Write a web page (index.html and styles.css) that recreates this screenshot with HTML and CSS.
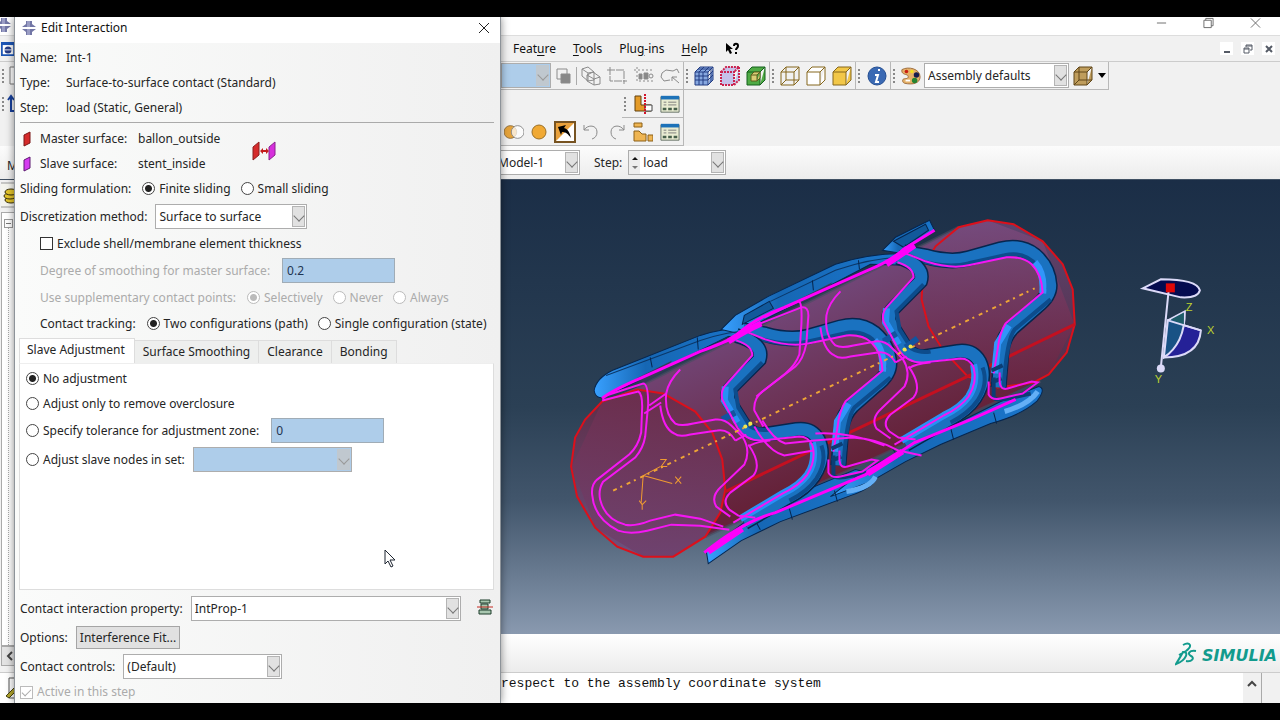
FILE: index.html
```html
<!DOCTYPE html>
<html lang="en">
<head>
<meta charset="utf-8">
<title>Edit Interaction</title>
<link rel="stylesheet" href="styles.css">
</head>
<body>
<svg class="defs" aria-hidden="true">
  <defs>
    <symbol id="logo" viewBox="0 0 16 16"><path d="M5 1h6v3l4 3H1l4-3z" fill="#7377a6"/><path d="M1 9h14l-4 3v3H5v-3L1 9z" fill="#7377a6"/><path d="M6 1h3v6H6zM6 9h3v6H6z" fill="#9a9dc4"/></symbol>
    <symbol id="box" viewBox="0 0 20 20"><path d="M1 6h13v13H1zM1 6l5-5h13l-5 5M19 1v13l-5 5"/></symbol>
    <symbol id="table" viewBox="0 0 22 20"><path d="M1 2h20v17H1z" fill="#e9ecd2" stroke="#5e6b60"/><path d="M1 1h20v4H1z" fill="#1d72b8"/><path d="M4 8h3M4 11h3M9 8h9M9 11h9" stroke="#777" stroke-width="1"/><path d="M3 14h4v3H3zM9 14h4v3H9zM15 14h4v3h-4z" fill="#47604b"/></symbol>
  </defs>
</svg>
<div class="app">
  <header class="titlebar">
    <svg class="i16 edge-logo"><use href="#logo"/></svg>
    <div class="win-buttons">
      <button aria-label="Minimize"><svg viewBox="0 0 12 12"><path d="M1 6h10"/></svg></button>
      <button aria-label="Restore"><svg viewBox="0 0 12 12"><path d="M1 3h8v8H1zM3 3V1h8v8H9"/></svg></button>
      <button aria-label="Close"><svg viewBox="0 0 12 12"><path d="M1 1l10 10M11 1L1 11"/></svg></button>
    </div>
  </header>
  <nav class="menubar">
    <svg class="doc-icon" viewBox="0 0 16 16"><path d="M1 1h14v14H1z" fill="#fff" stroke="#1c55b5" stroke-width="2"/><path d="M1 2h14" stroke="#1c55b5" stroke-width="3"/><circle cx="8" cy="9" r="4" fill="#263d87"/><path d="M3 9h10" stroke="#fff"/></svg>
    <div class="menus">
      <button>Feat<u>u</u>re</button><button><u>T</u>ools</button><button>Plu<u>g</u>-ins</button><button><u>H</u>elp</button>
      <button aria-label="What's this"><svg class="help-icon" viewBox="0 0 14 14"><path d="M1 1v9l2-2 2 4 2-1-2-4h3z"/><path d="M9 4c0-3 4-3 4 0 0 2-2 2-2 4M11 10v2" fill="none" stroke="#000" stroke-width="2"/></svg></button>
    </div>
    <div class="doc-buttons">
      <button aria-label="Minimize view"><svg viewBox="0 0 10 10"><path d="M2 8h6"/></svg></button>
      <button aria-label="Restore view"><svg viewBox="0 0 10 10"><path d="M1 4h5v5H1zM3 3V1h6v5H7" stroke-width="1"/><path d="M1 5h5M3 2h6" stroke-width="1"/></svg></button>
      <button aria-label="Close view"><svg viewBox="0 0 10 10"><path d="M2 2l6 6M8 2L2 8"/></svg></button>
    </div>
  </nav>
  <div class="toolbar row-a">
    <div class="under"><i class="grip"></i><svg class="edge-icon" viewBox="0 0 10 20"><path d="M9 1H3v17h6" fill="#fff" stroke="#777"/></svg></div>
    <div class="group">
      <span class="combo tool-combo disabled"><select disabled aria-label="Display group"><option></option></select></span>
      <button class="s25" aria-label="Replace"><svg viewBox="0 0 20 20" class="gray"><path d="M3 3h10v10H3z"/><path d="M7 8h9v9H7z" fill="#888"/></svg></button>
      <i class="sep"></i>
      <button class="s27" aria-label="Box views"><svg viewBox="0 0 20 20" class="gray"><path d="M1 3l6-2 6 5v8l-6 1-6-5zM1 3l6 4 6-1M7 7v8M6 9l6-3 7 5v7l-6 1-7-4zM6 9l7 4 6-2M13 13v6"/></svg></button>
      <button class="s26" aria-label="Select region"><svg viewBox="0 0 20 20" class="gray"><path d="M0 4h17v14M3 1v14h17" stroke-dasharray="8 1"/></svg></button>
      <button class="s27" aria-label="Select nodes"><svg viewBox="0 0 20 20" class="gray"><path d="M0 4h20M3 1v14h17" stroke-dasharray="2 2"/><path d="M5 8h3v5H5zM10 7h4v6h-4z" fill="#888"/><circle cx="17" cy="10" r="2"/></svg></button>
      <button class="s26" aria-label="Lasso"><svg viewBox="0 0 20 20" class="gray"><path d="M10 14l-6 1-3-4 1-4 4-3 7 1 4-2 2 4M19 17l-7-6M12 15v-4h5"/></svg></button>
    </div>
    <div class="group"><i class="grip"></i>
      <button class="s26" aria-label="Mesh"><svg viewBox="0 0 20 20" fill="#86a7df" stroke="#223c82"><use href="#box"/><path d="M5 6v13M9 6v13M1 10h13l5-5M1 14h13l5-5M4 3h13v13M10 1L5 6M15 1l-5 5" fill="none"/></svg></button>
      <button class="s26" aria-label="Seeds"><svg viewBox="0 0 20 20" fill="#c6c2ea" stroke="#cb2450" stroke-width="2" stroke-dasharray="2 1"><use href="#box"/></svg></button>
      <button class="s26" aria-label="Substructure"><svg viewBox="0 0 20 20"><g fill="#4fab45" stroke="#14601d"><use href="#box"/></g><path d="M5 9h6v6H5zM5 9l3-3h6l-3 3M14 6v6l-3 3" fill="#d9cd75" stroke="#5c5e1c"/></svg></button>
    </div>
    <div class="group"><i class="grip"></i>
      <button class="s26" aria-label="Wireframe"><svg viewBox="0 0 20 20" fill="none" stroke="#85671c"><use href="#box"/><path d="M1 19l5-5h13M6 14V1"/></svg></button>
      <button class="s26" aria-label="Hidden"><svg viewBox="0 0 20 20" fill="#fff" stroke="#85671c"><use href="#box"/></svg></button>
      <button class="s26" aria-label="Shaded"><svg viewBox="0 0 20 20" fill="#f2c748" stroke="#85671c"><use href="#box"/></svg></button>
    </div>
    <div class="group"><i class="grip wide"></i>
      <button class="s26" aria-label="Query"><svg viewBox="0 0 20 20"><circle cx="10" cy="10" r="9" fill="#3a69b3" stroke="#244e92"/><path d="M11 4h2M8 9h3l-2 7h3" fill="none" stroke="#fff" stroke-width="2"/></svg></button>
    </div>
    <div class="group"><i class="grip"></i>
      <button class="s26" aria-label="Colors"><svg viewBox="0 0 22 20"><path d="M1 3C8-1 21 2 21 11c0 7-8 9-17 7-3-1-3-5 0-5 4 0 5-2 3-4C5 8 0 8 1 3z" fill="#e5b169" stroke="#99693b"/><circle cx="6" cy="5" r="2" fill="#c91e12"/><circle cx="12" cy="5" r="2" fill="#f3dd23"/><circle cx="17" cy="9" r="3" fill="#151c4f"/><circle cx="15" cy="15" r="3" fill="#258432"/><path d="M5 15h5" stroke="#fff" stroke-width="2"/></svg></button>
      <span class="combo color-combo"><select aria-label="Color code"><option>Assembly defaults</option></select></span>
      <button class="s27" aria-label="Translucency"><svg viewBox="0 0 20 20" fill="#bf9d5c" stroke="#604719"><use href="#box"/><path d="M1 19l5-5h13M6 14V1" fill="none"/></svg></button>
      <button class="caret" aria-label="More"></button>
    </div>
  </div>
  <div class="toolbar row-b">
    <div class="under"><i class="grip"></i><svg class="edge-icon" viewBox="0 0 10 20"><path d="M4 18V2M1 6l3-4 3 4M4 17h6" fill="none" stroke="#17409b" stroke-width="2"/></svg></div>
    <div class="group b-group"><i class="grip"></i>
      <button class="s27" aria-label="Partition"><svg viewBox="0 0 20 20"><path d="M2 2h6v9h10v6H2z" fill="#e49b28" stroke="#60410f"/><path d="M12 11h7v6h-7z" fill="#fff" stroke="#444"/><path d="M12 0v20" stroke="#d2142b" stroke-width="2" stroke-dasharray="2 1"/></svg></button>
      <button class="s27" aria-label="Partition manager"><svg viewBox="0 0 22 20"><use href="#table"/></svg></button>
    </div>
  </div>
  <div class="toolbar row-c">
    <div class="under"></div>
    <div class="group">
      <button class="s25" aria-label="Intersect"><svg viewBox="0 0 22 20"><circle cx="7" cy="10" r="7" fill="#e5a33a" stroke="#8b6a38"/><circle cx="15" cy="10" r="7" fill="#fffb" stroke="#888"/></svg></button>
      <button class="s25" aria-label="Select whole"><svg viewBox="0 0 20 20"><circle cx="10" cy="10" r="7" fill="#f0a934" stroke="#9b7026"/></svg></button>
      <button class="s27 pressed" aria-label="Drag select"><svg viewBox="0 0 22 22"><path d="M0 0h22v22H0z" fill="#fff"/><path d="M0 0h22L0 22z" fill="#e9a13c"/><path d="M1 1h20v20H1z" fill="none" stroke="#775321" stroke-width="2"/><path d="M4 6l8-2-2 3c4 1 6 5 7 10-3-4-5-6-9-6l-1 3z"/></svg></button>
      <button class="s26" aria-label="Undo"><svg viewBox="0 0 20 20" class="gray"><path d="M3 3v5h5M3 8c4-6 13-5 13 2 0 4-2 6-5 7"/></svg></button>
      <button class="s26" aria-label="Redo"><svg viewBox="0 0 20 20" class="gray"><path d="M17 3v5h-5M17 8C13 2 4 3 4 10c0 4 2 6 5 7"/></svg></button>
      <button class="s26" aria-label="Assembly"><svg viewBox="0 0 20 20" fill="#efb552" stroke="#8c6018"><path d="M1 1h8v4H1zM1 9h5l3 3h4v7H1zM15 13h5v6h-5z"/></svg></button>
      <button class="s27" aria-label="Feature manager"><svg viewBox="0 0 22 20"><use href="#table"/></svg></button>
    </div>
  </div>
  <div class="context">
    <div class="under"><span class="edge-letter">M</span></div>
    <span class="combo model-combo"><select aria-label="Model"><option>Model-1</option></select></span>
    <label for="step">Step:</label>
    <span class="combo step-combo"><i class="spin"></i><select id="step"><option>load</option></select></span>
  </div>
  <main class="work">
    <aside class="tree">
      <svg class="db" viewBox="0 0 16 26"><path d="M0 1h16v24H0" fill="#f4f4ee" stroke="#999"/><g fill="#e5c62c" stroke="#332a0a"><ellipse cx="10" cy="18" rx="6" ry="3"/><ellipse cx="9" cy="14" rx="6" ry="3"/><ellipse cx="10" cy="10" rx="6" ry="3"/></g></svg>
      <div class="tree-list"><i class="minus"></i></div>
      <button class="scroll-left" aria-label="Scroll left"><svg viewBox="0 0 10 10"><path d="M7 1L3 5l4 4"/></svg></button>
    </aside>
    <section class="right">
      <svg class="viewport" viewBox="501 180 778 455" preserveAspectRatio="xMidYMid slice" role="img" aria-label="Stent and balloon assembly">
        <defs>
          <linearGradient id="sky" x1="0" y1="0" x2="0" y2="1"><stop offset="0" stop-color="#1a2d46"/><stop offset=".5" stop-color="#2b4055"/><stop offset=".7" stop-color="#42566c"/><stop offset="1" stop-color="#8f9fb5"/></linearGradient>
          <linearGradient id="body" gradientUnits="userSpaceOnUse" x1="790" y1="290" x2="860" y2="460"><stop offset="0" stop-color="#72497d"/><stop offset=".5" stop-color="#6d3559"/><stop offset="1" stop-color="#652239"/></linearGradient>
          <linearGradient id="cap" x1="0" y1="0" x2="0" y2="1"><stop offset="0" stop-color="#6a2944"/><stop offset="1" stop-color="#714b7d"/></linearGradient>
          <linearGradient id="cap2" x1="0" y1="0" x2="0" y2="1"><stop offset="0" stop-color="#764c7e"/><stop offset="1" stop-color="#6a2642"/></linearGradient>
          <linearGradient id="blue" x1="0" y1="0" x2="1" y2="0"><stop offset="0" stop-color="#38a0ff"/><stop offset=".3" stop-color="#1667b4"/><stop offset="1" stop-color="#1a76cc"/></linearGradient>
          <path id="crown" d="M903 253L925 257Q950 264 968 259L1000 250Q1020 245 1034 256Q1048 268 1049 286Q1049 297 1036 307L1012 328Q1003 337 1001 350L998 388"/>
          <path id="crown-in" d="M905 254L925 262Q950 270 968 266L1006 258Q1022 257 1031 265Q1041 275 1042 293L1005 324Q999 333 997 350L993 374"/>
          <path id="crown-mid" d="M912 259Q945 270 968 264L1004 256Q1020 252 1032 262Q1043 272 1044 290M1050 300L1014 330Q1006 340 1003 388"/>
          <path id="wave" d="M897 258Q925 266 920 282L893 309Q886 316 890 324L903 345Q911 359 925 357L957 352Q972 350 979 362Q987 379 974 399Q966 411 948 420L905 445"/>
          <path id="wave-in" d="M897 263Q913 268 913 278L886 308Q881 314 883 322L898 350Q907 364 923 363L960 359Q969 359 973 368Q977 382 968 397Q960 408 943 416L894 445"/>
          <path id="wave-mid" d="M923 285L896 312L899 330L911 349Q920 354 930 352M982 368Q988 384 977 401Q968 414 950 423"/>
          <g id="ribbon" fill="none"><use href="#crown" stroke="#06264e" stroke-width="16"/><use href="#crown" stroke="#1a72c0" stroke-width="13"/><use href="#crown-mid" stroke="#0d4c8c" stroke-width="4"/><path d="M1034 263Q1044 274 1042 294M1008 326L997 344L994 374" stroke="#3195fa" stroke-width="7"/></g>
          <g id="ribbon-b" fill="none"><use href="#wave" stroke="#06264e" stroke-width="15"/><use href="#wave" stroke="#1a72c0" stroke-width="12"/><use href="#wave-mid" stroke="#0d4c8c" stroke-width="4"/><path d="M886 309L885 323L898 345M973 365Q977 384 968 397Q960 408 943 416L901 441" stroke="#2890f5" stroke-width="7"/></g>
          <g id="clip" fill="none"><path d="M991 371L1002 366M991 383L1001 379M993 378V398Q995 402 1012 398L1030 394" stroke="#0c3d73" stroke-width="4"/><path d="M988 382V395Q991 401 1000 399L1022 394L1037 383L1031 382L1007 389Q1000 391 999 383V373" stroke="#f312f1" stroke-width="2"/></g>
          <g id="back" fill="none" stroke="#f516f3" stroke-width="2"><path d="M680 370Q668 382 666 394Q664 414 675 424Q681 427 693 424L715 420Q724 419 731 426L742 437Q751 451 744 465L721 487Q710 497 716 507L730 517"/><path d="M660 406Q663 429 674 434Q679 438 690 435L717 431Q728 429 735 441M748 445Q762 465 753 476L730 493Q721 502 729 510L738 516L755 518M735 441L746 435M748 447Q755 442 770 441"/></g>
        </defs>
        <path d="M400 170h980v475H400z" fill="url(#sky)"/>
        <path d="M602 402L637 388L958 228L987 221L1042 242L1074 325L1048 375L990 405L705 537L673 557L643 557L595 528L572 467z" fill="url(#body)"/>
        <path d="M637 388L958 228M705 537L1040 382" stroke="#484d61" stroke-width="3" opacity=".6"/>
        <path d="M987 221L1013 225L1042 242L1062 265L1072 290L1074 325L1066 353L1048 375L1033 383L997 388L967 377L942 350L928 327L921 300L923 267L935 247L958 228z" fill="url(#cap2)" fill-opacity=".7" stroke="#dc101b" stroke-width="2"/>
        <path d="M602 402L585 420L575 438L571 467L577 497L595 528L617 547L643 557L673 557L705 537L720 513L725 490L722 460L712 433L695 412L663 394L637 390z" fill="url(#cap)" fill-opacity=".8" stroke="#dc101b" stroke-width="2"/>
        <path d="M725 492L967 377L1074 325" stroke="#c41020" stroke-width="3"/>
        <g stroke="#06264e" fill="url(#blue)">
          <path d="M594 391Q596 379 612 371L700 336Q735 325 765 331L762 340L728 337L606 397Q596 401 594 391z"/>
          <path d="M721 330L735 316L768 297L835 265Q875 252 910 255L905 266L870 265L738 334z"/>
          <path d="M882 251L895 238L929 221L934 231L900 254z"/>
          <path d="M706 551L745 522L802 492L855 470L878 476Q872 489 850 496L780 522L741 541L708 564z"/>
          <path d="M830 497L863 471L920 442L1000 402L1038 387Q1046 389 1036 402Q1020 416 990 424L940 445L905 462L870 482z"/>
        </g>
        <path d="M606 376L700 341Q735 330 755 332M770 302L835 271Q870 259 900 258" fill="none" stroke="#0b3768"/>
        <path d="M744 316L769 302L773 309L742 325zM893 242L925 225L928 231L903 248z" fill="#12599b" stroke="#06264e"/>
        <path d="M650 358l2 10M697 338l1 12M812 281l1 10M858 261l1 9M789 509l3 11M834 491l3 11M950 428l3 12M993 413l3 11M892 449l6 9M755 521l5 9" stroke="#06264e"/>
        <path d="M636 379L672 361L664 371L645 383zM795 302L832 283L825 292L800 304z" fill="#343b55"/>
        <path d="M846 492Q870 488 875 477M1004 412Q1028 405 1037 392" fill="none" stroke="#64aff5" stroke-width="5"/>
        <use href="#ribbon"/><use href="#ribbon" x="-160" y="78"/>
        <use href="#ribbon-b"/><use href="#ribbon-b" x="-161" y="78"/>
        <path d="M883 342L896 334M905 348L917 339M722 420L735 413" stroke="#1254a0" stroke-width="6"/>
        <g fill="none" stroke="#f516f3" stroke-width="2">
          <use href="#crown-in"/><use href="#crown-in" x="-160" y="78"/><use href="#wave-in"/><use href="#wave-in" x="-161" y="78"/>
          <path d="M602 401L638 392Q642 394 642 407L641 433Q638 447 629 455L597 480Q591 485 592 495Q594 519 618 531Q630 535 647 531L671 525L700 526L729 530"/>
          <path d="M606 396L643 384Q648 384 648 405L645 437Q643 449 635 458L603 482Q598 490 600 500Q605 520 625 525Q635 527 650 521L675 515L700 519L723 527M644 414L661 403M649 406L666 394"/>
          <path d="M760 324L801 308Q808 307 808 316L806 344Q803 360 795 367L762 392Q753 399 754 411L763 427"/>
          <path d="M764 318L798 302Q802 302 801 325L799 355Q795 366 785 374L756 397M754 427Q768 452 784 456L813 451M762 421Q773 440 785 444L814 441L852 438Q876 439 898 451L921 456M815 434Q850 432 884 446"/>
        </g>
        <use href="#back"/><use href="#back" x="160" y="-78"/>
        <use href="#clip"/><use href="#clip" x="-160" y="78"/>
        <g fill="none" stroke="#ff00fb" stroke-width="3"><path d="M602 399Q612 391 640 379L700 352Q725 343 735 337Q752 320 784 308L865 272Q890 262 903 250L934 231"/><path d="M704 553Q742 522 775 513L865 475L914 443L970 420L1015 400"/></g>
        <path d="M728 342Q745 331 761 324M886 265Q901 255 914 246M867 474L902 452M708 552L742 529" stroke="#ff00fb" stroke-width="6" fill="none"/>
        <path d="M613 491L1034 289" stroke="#efa536" stroke-width="2" stroke-dasharray="4 4 2 5"/>
        <path d="M643 476L641 503M643 476L672 484M643 476L660 467" stroke="#f09b31" stroke-width="1"/>
        <g fill="none" stroke="#f09b31"><path d="M675 477l6 7M681 477l-6 7M660 460h6l-5 7h6M639 501l3 4 4-4M642 505v5"/></g>
        <g fill="#eee650"><circle cx="745" cy="427" r="2"/><circle cx="750" cy="424" r="2"/><circle cx="904" cy="350" r="2"/><circle cx="910" cy="347" r="2"/></g>
        <g stroke="#dcdaf8" stroke-width="2"><path d="M1142 289L1160 280Q1196 280 1199 291Q1197 299 1180 298z" fill="#050b50"/><path d="M1167 321L1200 331Q1198 358 1163 358z" fill="#252197"/><path d="M1167 321L1184 312Q1184 344 1163 358z" fill="#195285"/><path d="M1170 320L1183 313V325z" fill="#1e5c68" stroke="none"/><path d="M1167 321L1200 331M1168 289L1160 368" fill="none"/></g>
        <path d="M1165 284h9v9h-9z" fill="#e00808"/><circle cx="1160" cy="369" r="4" fill="#dcdaf8"/>
        <g class="axis"><text x="1185" y="312">Z</text><text x="1206" y="335">X</text><text x="1154" y="384">Y</text></g>
      </svg>
      <div class="brand"><svg viewBox="0 0 22 24"><path d="M8 3c7-4 10 1 3 6L4 13M8 10c6-1 4 8-7 12 3-5 5-8 7-12zM21 9c-7-1-9 3-5 5s1 6-5 5" fill="none" stroke="#129b8d" stroke-width="2"/></svg><span>SIMULIA</span></div>
    </section>
  </main>
  <footer class="messages">
    <div class="under"><svg class="pencil" viewBox="0 0 10 22"><path d="M4 1h6v20H4z" fill="#fff" stroke="#555"/><path d="M1 19l9-9v5l-6 6z" fill="#b2a62b" stroke="#443f10"/></svg></div>
    <output>respect to the assembly coordinate system</output>
    <button class="scroll-up" aria-label="Scroll up"><svg viewBox="0 0 10 10"><path d="M1 7l4-4 4 4"/></svg></button>
  </footer>
</div>

<form class="dialog" role="dialog" aria-labelledby="dlg-title">
  <div class="dlg-title"><svg class="i16"><use href="#logo"/></svg><h1 id="dlg-title">Edit Interaction</h1><button type="button" aria-label="Close"><svg viewBox="0 0 12 12"><path d="M1 1l10 10M11 1L1 11"/></svg></button></div>
  <dl class="info"><dt>Name:</dt><dd>Int-1</dd><dt>Type:</dt><dd>Surface-to-surface contact (Standard)</dd><dt>Step:</dt><dd>load (Static, General)</dd></dl>
  <hr>
  <div class="surfaces">
    <svg class="face" viewBox="0 0 8 16"><path d="M1 4l6-3v11l-6 3z" fill="#d52b2b" stroke="#7b1717"/></svg><span>Master surface:</span><span>ballon_outside</span>
    <button type="button" class="swap" aria-label="Switch surfaces"><svg viewBox="0 0 24 20"><path d="M1 6l6-5v13l-6 5z" fill="#d52b2b" stroke="#8b2020"/><path d="M17 6l6-5v13l-6 5z" fill="#d630dc" stroke="#8b238e"/><path d="M8 10l3-3v2h3V7l3 3-3 3v-2h-3v2z" fill="#c31c1c"/></svg></button>
    <svg class="face" viewBox="0 0 8 16"><path d="M1 4l6-3v11l-6 3z" fill="#d53cf0" stroke="#5d1a70"/></svg><span>Slave surface:</span><span>stent_inside</span>
  </div>
  <div class="row short"><span class="lbl">Sliding formulation:</span><label><input type="radio" name="slide" checked>Finite sliding</label><label><input type="radio" name="slide">Small sliding</label></div>
  <div class="row tall top"><label for="disc">Discretization method:</label><span class="combo disc-combo"><select id="disc"><option>Surface to surface</option></select></span></div>
  <div class="row tall indent"><label><input type="checkbox">Exclude shell/membrane element thickness</label></div>
  <div class="row tall indent"><label class="off" for="deg">Degree of smoothing for master surface:</label><input class="field" id="deg" value="0.2" disabled></div>
  <div class="row tall indent off"><span class="lbl">Use supplementary contact points:</span><label><input type="radio" name="supp" checked disabled>Selectively</label><label><input type="radio" name="supp" disabled>Never</label><label><input type="radio" name="supp" disabled>Always</label></div>
  <div class="row short indent"><span class="lbl">Contact tracking:</span><label><input type="radio" name="track" checked>Two configurations (path)</label><label><input type="radio" name="track">Single configuration (state)</label></div>
  <div class="tabs" role="tablist"><button type="button" role="tab" aria-selected="true">Slave Adjustment</button><button type="button" role="tab">Surface Smoothing</button><button type="button" role="tab">Clearance</button><button type="button" role="tab">Bonding</button></div>
  <div class="panel" role="tabpanel">
    <div class="row short"><label><input type="radio" name="adj" checked>No adjustment</label></div>
    <div class="row short"><label><input type="radio" name="adj">Adjust only to remove overclosure</label></div>
    <div class="row big"><label><input type="radio" name="adj">Specify tolerance for adjustment zone:</label><input class="field" value="0" aria-label="Tolerance" disabled></div>
    <div class="row big"><label><input type="radio" name="adj">Adjust slave nodes in set:</label><span class="combo set-combo disabled"><select disabled aria-label="Node set"><option></option></select></span></div>
  </div>
  <div class="row big"><label for="prop">Contact interaction property:</label><span class="combo prop-combo"><select id="prop"><option>IntProp-1</option></select></span><button type="button" class="create" aria-label="Create interaction property"><svg viewBox="0 0 16 16"><path d="M3 1h10v3H3zM4 5h7v5H4zM2 11h12v4H2z" fill="#a9c7b0" stroke="#1d3d2a"/><path d="M0 8h16" stroke="#c52b23"/></svg></button></div>
  <div class="row big opt"><span>Options:</span><button type="button" class="push">Interference Fit...</button></div>
  <div class="row big"><label for="ctrl">Contact controls:</label><span class="combo ctrl-combo"><select id="ctrl"><option>(Default)</option></select></span></div>
  <div class="row last off"><label><input type="checkbox" checked disabled>Active in this step</label></div>
</form>
<svg class="cursor" viewBox="0 0 12 19" aria-hidden="true"><path d="M1 1v14l3-3 3 6 2-1-3-6h5z" fill="#fff" stroke="#1d2430"/></svg>
</body>
</html>
```
FILE: styles.css
```css
* { box-sizing: border-box; }
body { margin: 0; background: #000; color: #252525; font: 12px/18px "Noto Sans", "Open Sans", sans-serif; overflow: hidden; }
button, input, select { font: inherit; color: inherit; margin: 0; padding: 0; border: 0; background: none; }
.defs { position: absolute; width: 0; height: 0; }
.i16 { width: 16px; height: 16px; }

.app { height: 100vh; border: solid #000; border-width: 17px 0; display: flex; flex-direction: column; background: #f1f1f1; overflow: hidden; }
.under { width: 501px; flex: none; display: flex; align-items: center; }
.titlebar { height: 18px; flex: none; background: #fff; display: flex; justify-content: space-between; }
.edge-logo { margin-left: -4px; }
.win-buttons { display: flex; gap: 36px; padding-right: 19px; }
.win-buttons button { width: 11px; height: 11px; display: flex; }
.win-buttons svg, .dlg-title button svg { width: 12px; height: 12px; fill: none; stroke: #666; }
.menubar { height: 27px; flex: none; display: flex; align-items: center; border-top: 1px solid #ddd; border-bottom: 1px solid #ccc; }
.doc-icon { width: 16px; height: 14px; flex: none; }
.menus { display: flex; gap: 17px; padding-left: 497px; color: #111; }
.menus u { text-underline-offset: 2px; }
.help-icon { width: 14px; height: 14px; display: block; }
.doc-buttons { display: flex; gap: 8px; margin-left: auto; padding-right: 5px; }
.doc-buttons button { width: 13px; height: 13px; background: #fff; display: flex; align-items: center; justify-content: center; }
.doc-buttons svg { width: 10px; height: 10px; fill: none; stroke: #555b66; stroke-width: 2; }

.toolbar { height: 28px; flex: none; display: flex; }
.group { display: flex; align-items: center; border-right: 1px solid #b8b8b8; border-bottom: 1px solid #b8b8b8; }
.group button { display: flex; align-items: center; justify-content: center; height: 24px; flex: none; }
.group button svg { width: 20px; height: 20px; }
.group .pressed svg { width: 22px; height: 22px; }
.gray { fill: none; stroke: #8b8b8b; }
.s25 { width: 25px; }
.s26 { width: 26px; }
.s27 { width: 27px; }
.b-group { margin-left: 121px; }
.sep { width: 1px; height: 18px; background: #aaa; }
.grip { width: 7px; height: 16px; flex: none; background: radial-gradient(circle at 3px 2px, #888 1px, transparent 1px) 0 0 / 7px 4px; }
.grip.wide { width: 8px; }
.edge-icon { width: 10px; height: 20px; }
.caret { width: 12px; }
.caret::after { content: ""; border: 4px solid transparent; border-top: 5px solid #000; border-bottom: 0; }

.combo { position: relative; display: inline-flex; height: 25px; flex: none; background: #fff; border: 1px solid #adadad; }
.combo select { appearance: none; width: 100%; padding: 0 14px 0 3px; border-radius: 0; color: #252525; opacity: 1; }
.combo::before { content: ""; position: absolute; right: 1px; top: 1px; bottom: 1px; width: 11px; background: #e1e1e1; border: 1px solid #b4b4b4; pointer-events: none; }
.combo::after { content: ""; position: absolute; right: 3px; top: 7px; width: 7px; height: 7px; border: solid #777; border-width: 0 1px 1px 0; transform: rotate(45deg); pointer-events: none; }
.combo.disabled { background: #aecdea; }
.combo.disabled::before { background: #c0c8cf; border-color: #c0c8cf; }
.combo.disabled::after { border-color: #999; }
.tool-combo { width: 50px; }
.color-combo { width: 145px; }
.context { height: 34px; flex: none; display: flex; align-items: center; background: linear-gradient(#fcfcfc, #ececec); border-bottom: 1px solid #405063; }
.context label { padding: 0 6px 0 14px; }
.edge-letter { padding: 6px 0 0 7px; }
.model-combo { width: 86px; margin-left: -7px; }
.step-combo { width: 98px; }
.spin { width: 11px; flex: none; background: #eee; display: flex; flex-direction: column; justify-content: center; gap: 6px; align-items: center; }
.spin::before, .spin::after { content: ""; border: 3px solid transparent; }
.spin::before { border-bottom-color: #111; border-top: 0; }
.spin::after { border-top-color: #777; border-bottom: 0; }

.work { flex: 1; min-height: 0; display: flex; border-bottom: 1px solid #ccc; }
.tree { width: 501px; flex: none; display: flex; flex-direction: column; padding: 2px 0 6px 1px; }
.db { width: 16px; height: 26px; }
.tree-list { flex: 1; margin-top: 4px; background: #fff; border: 1px solid #aaa; position: relative; }
.tree-list::before { content: ""; position: absolute; left: 6px; top: 8px; bottom: 0; border-left: 1px dotted #aaa; }
.minus { position: absolute; left: 2px; top: 6px; width: 9px; height: 9px; background: linear-gradient(#777, #777) center / 5px 1px no-repeat #fff; border: 1px solid #999; }
.scroll-left { height: 20px; border: 1px solid #aaa; background: #e3e3e3; display: flex; align-items: center; padding-left: 3px; }
.scroll-left svg, .scroll-up svg { width: 10px; height: 10px; fill: none; stroke: #444; stroke-width: 2; }
.right { flex: 1; min-width: 0; display: flex; flex-direction: column; }
.viewport { flex: 1; min-height: 0; width: 100%; display: block; }
.axis { fill: #bed22f; font: 11px "Liberation Sans", sans-serif; }
.brand { height: 38px; flex: none; display: flex; align-items: center; justify-content: flex-end; gap: 5px; padding: 2px 3px 0 0; background: linear-gradient(#fff, #ececec); color: #129b8d; font: oblique bold 16px/20px "DejaVu Sans", sans-serif; }
.brand svg { width: 22px; height: 24px; }
.brand span { padding-top: 4px; }
.messages { height: 30px; flex: none; display: flex; background: #fff; margin-right: 18px; border-right: 1px solid #aaa; color: #111; font: 13px/22px "Liberation Mono", monospace; }
.messages .under { padding-left: 5px; }
.pencil { width: 10px; height: 22px; }
.scroll-up { margin-left: auto; width: 18px; background: #f0f0f0; display: flex; justify-content: center; padding-top: 6px; }

.dialog { position: absolute; left: 14px; top: 17px; bottom: 17px; width: 487px; display: flex; flex-direction: column; padding: 0 6px 0 5px; overflow: hidden; background: linear-gradient(90deg, #fafbfa, #f0f0f0); border: solid #8d9399; border-width: 0 1px; box-shadow: 0 0 8px #0007; }
.dlg-title { height: 26px; flex: none; margin: 0 -6px 2px -5px; padding: 0 10px 5px 6px; background: #fff; display: flex; align-items: center; gap: 4px; }
.dlg-title h1 { margin: 0; font: inherit; color: #111; }
.dlg-title button { margin-left: auto; width: 12px; height: 12px; display: flex; }
.dlg-title button svg { stroke: #222; }
.info { display: grid; grid-template-columns: 46px 1fr; grid-auto-rows: 25px; align-items: center; margin: 0; }
.info dd { margin: 0; }
hr { width: 100%; flex: none; height: 1px; border: 0; background: #aaa; margin: 2px 0 3px; }
.surfaces { display: grid; grid-template-columns: 20px 98px 114px 26px; grid-auto-rows: 25px; align-items: center; }
.face { width: 8px; height: 16px; margin-left: 3px; }
.swap { grid-row: 1 / 3; grid-column: 4; display: flex; }
.swap svg { width: 24px; height: 20px; }
.row { display: flex; align-items: center; flex: none; gap: 8px; }
.short { height: 25px; }
.tall { height: 27px; }
.top { margin-top: 2px; }
.big { height: 29px; }
.last { height: 22px; }
.indent { padding-left: 20px; }
.row label { display: flex; align-items: center; gap: 4px; }
.row .lbl { padding-right: 3px; }
.row label + label { margin-left: 2px; }
.off { color: #ababab; }
input[type="radio"] { appearance: none; width: 13px; height: 13px; border: 1px solid #444; border-radius: 50%; background: #fff; flex: none; }
input[type="radio"]:checked { background: radial-gradient(circle, #222 3px, #fff 4px); }
input[type="radio"]:disabled { border-color: #bbb; }
input[type="radio"]:disabled:checked { background: radial-gradient(circle, #bbb 3px, #fff 4px); }
input[type="checkbox"] { appearance: none; width: 13px; height: 13px; border: 1px solid #333; background: #fff; flex: none; }
input[type="checkbox"]:disabled { border-color: #bbb; }
input[type="checkbox"]:checked::after { content: ""; display: block; width: 8px; height: 4px; margin: 2px 1px; border: solid #aaa; border-width: 0 0 1px 1px; transform: rotate(-45deg); }
.field { width: 113px; height: 25px; margin-left: 4px; padding: 0 4px; background: #aecdea; border: 1px solid #a0acb6; color: #1f3552; }
.disc-combo { width: 152px; }
.tabs { display: flex; align-items: flex-end; margin: 2px 0 0 -1px; flex: none; height: 25px; }
.tabs button { height: 23px; padding: 0 8px; background: #eeefee; border: 1px solid #ddd; border-width: 1px 1px 0 0; }
.tabs button[aria-selected] { height: 25px; background: #fff; border-left-width: 1px; padding: 0 9px 3px 7px; }
.panel { flex: 1; min-height: 0; margin: 0 0 4px -1px; padding: 2px 6px; background: #fff; border: 1px solid #ddd; border-top-color: #eee; }
.set-combo { width: 159px; }
.prop-combo { width: 270px; }
.ctrl-combo { width: 159px; }
.create { margin-left: 8px; width: 16px; height: 20px; }
.create svg { width: 16px; height: 16px; }
.push { height: 23px; padding: 0 3px; background: #e1e1e1; border: 1px solid #a5a5a5; }
.cursor { position: absolute; left: 384px; top: 549px; width: 12px; height: 19px; }
```
